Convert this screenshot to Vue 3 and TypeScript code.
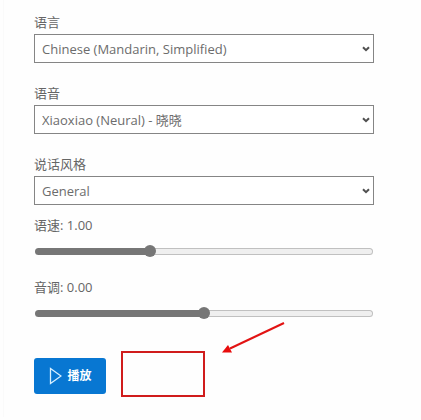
<script setup lang="ts">
import { reactive, computed } from 'vue'

interface Field {
  id: string
  label: string
  value: string
  options: string[]
}

interface Slider {
  id: string
  label: string
  min: number
  max: number
  value: number
}

const fields = reactive<Field[]>([
  { id: 'language', label: '语言', value: 'Chinese (Mandarin, Simplified)', options: ['Chinese (Mandarin, Simplified)'] },
  { id: 'voice', label: '语音', value: 'Xiaoxiao (Neural) - 晓晓', options: ['Xiaoxiao (Neural) - 晓晓'] },
  { id: 'style', label: '说话风格', value: 'General', options: ['General'] },
])

const sliders = reactive<Slider[]>([
  { id: 'rate', label: '语速', min: 0, max: 3, value: 1 },
  { id: 'pitch', label: '音调', min: -1, max: 1, value: 0 },
])

const fills = computed(() => sliders.map((s) => `${((s.value - s.min) / (s.max - s.min)) * 100}%`))
</script>

<template>
  <main class="panel">
    <form class="form" @submit.prevent>
      <div v-for="f in fields" :key="f.id" class="field">
        <label :for="f.id">{{ f.label }}</label>
        <div class="select">
          <select :id="f.id" v-model="f.value">
            <option v-for="o in f.options" :key="o" :value="o">{{ o }}</option>
          </select>
          <svg class="chevron" viewBox="0 0 8 6" aria-hidden="true">
            <path d="M1 1.2 L4 4.2 L7 1.2" />
          </svg>
        </div>
      </div>

      <div class="sliders">
        <div v-for="(s, i) in sliders" :key="s.id" class="slider">
          <label :for="s.id">{{ s.label }}: {{ s.value.toFixed(2) }}</label>
          <input
            :id="s.id"
            v-model.number="s.value"
            type="range"
            :min="s.min"
            :max="s.max"
            step="0.01"
            :style="{ '--fill': fills[i] }"
          />
        </div>
      </div>

      <div class="actions">
        <button type="submit" class="play">
          <svg viewBox="0 0 14 18" aria-hidden="true">
            <path d="M2.5 1.5 V16.5 L13 9 Z" />
          </svg>
          <span>播放</span>
        </button>
        <div class="highlight">
          <svg class="arrow" viewBox="0 0 64 34" aria-hidden="true">
            <path class="shaft" d="M62 3 L8 28.5" />
            <path class="head" d="M0 32.5 L6 25 L10 32.5 Z" />
          </svg>
        </div>
      </div>
    </form>
  </main>
</template>

<style>
body {
  margin: 0;
  background: #fefefe;
}
</style>

<style scoped>
.panel {
  margin-left: 3px;
  padding: 12px 47px 20px 30px;
  border-left: 1px solid #fafafa;
  font-family: 'Open Sans', 'Noto Sans CJK SC', sans-serif;
  font-size: 13px;
  line-height: 20px;
  color: #666;
}

.form {
  display: flex;
  flex-direction: column;
}

.field {
  display: flex;
  flex-direction: column;
  gap: 2px;
  margin-bottom: 20px;
}

.field:nth-child(3) {
  margin-bottom: 10px;
}

.select {
  display: grid;
  align-items: center;
}

select {
  grid-area: 1 / 1;
  appearance: none;
  box-sizing: border-box;
  width: 100%;
  height: 29px;
  margin: 0;
  padding: 0 24px 0 7px;
  border: 1px solid #858585;
  border-radius: 0;
  background: #fff;
  color: #6c6c6c;
  font: inherit;
}

.chevron {
  grid-area: 1 / 1;
  justify-self: end;
  width: 8px;
  height: 6px;
  margin-right: 4px;
  pointer-events: none;
}

.chevron path {
  fill: none;
  stroke: #505050;
  stroke-width: 2;
}

.sliders {
  display: flex;
  flex-direction: column;
  gap: 20px;
}

.slider {
  display: flex;
  flex-direction: column;
  gap: 10px;
}

input[type='range'] {
  appearance: none;
  height: 12px;
  margin: 0 1px;
  background: none;
}

input[type='range']::-webkit-slider-runnable-track {
  box-sizing: border-box;
  height: 7px;
  border: 1px solid transparent;
  border-radius: 4px;
  background:
    linear-gradient(#767676, #767676) 0 0 / var(--fill) 100% no-repeat border-box,
    linear-gradient(#efefef, #efefef) padding-box,
    linear-gradient(#c0c0c0, #c0c0c0) border-box;
}

input[type='range']::-webkit-slider-thumb {
  appearance: none;
  width: 12px;
  height: 12px;
  margin-top: -4px;
  border-radius: 50%;
  background: #767676;
}

.actions {
  display: flex;
  align-items: flex-start;
  gap: 15px;
  margin-top: 32px;
}

.play {
  display: flex;
  align-items: center;
  justify-content: center;
  gap: 5px;
  width: 72px;
  height: 36px;
  margin-top: 7px;
  padding: 0;
  border: 0;
  border-radius: 3px;
  background: #0877d2;
  color: #fff;
  font: inherit;
  font-size: 12px;
  font-weight: 700;
}

.play svg {
  width: 14px;
  height: 18px;
}

.play path {
  fill: none;
  stroke: #d8f0ff;
  stroke-width: 1.3;
}

.highlight {
  position: relative;
  box-sizing: border-box;
  width: 84px;
  height: 46px;
  border: 2px solid #d01c1c;
}

.arrow {
  position: absolute;
  left: 99px;
  bottom: 41px;
  width: 64px;
  height: 34px;
}

.shaft {
  fill: none;
  stroke: #e21313;
  stroke-width: 2;
}

.head {
  fill: #e80c0c;
}
</style>
